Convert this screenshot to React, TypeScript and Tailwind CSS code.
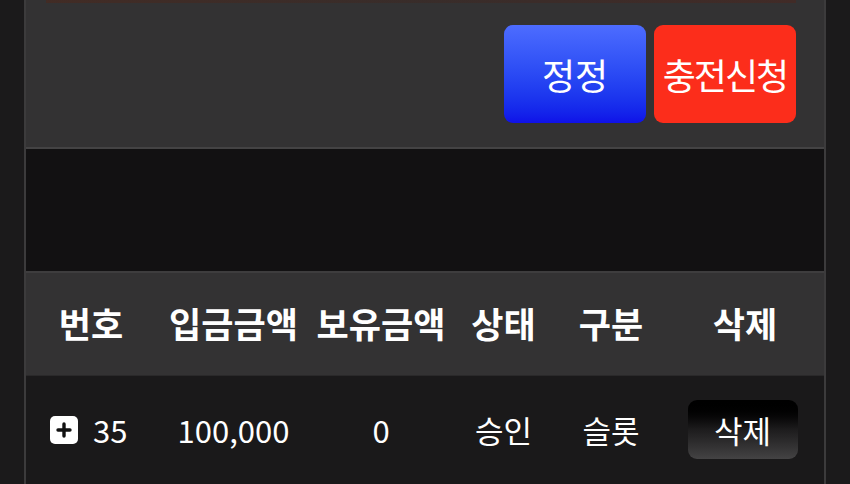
const font = { fontFamily: '"Noto Sans CJK KR", "Noto Sans", sans-serif' };

const cols = ["w-[130px]", "w-[155px]", "w-[140px]", "w-[105px]", "w-[110px]", "flex-1"];
const heads = ["번호", "입금금액", "보유금액", "상태", "구분", "삭제"];

function PlusBox() {
  return (
    <span className="w-[28px] h-[28px] rounded-[5px] bg-white flex items-center justify-center">
      <svg width="16" height="16" viewBox="0 0 16 16">
        <path d="M8 2v12M2 8h12" stroke="#111" strokeWidth="3.4" strokeLinecap="round" />
      </svg>
    </span>
  );
}

export default function App() {
  return (
    <div className="w-[850px] h-[484px] bg-[#1b1a1b] overflow-hidden" style={font}>
      <div className="mx-[24px] w-[802px] h-full flex flex-col border-x-2 border-[#3c3b3c]">
        {/* top panel with actions */}
        <section className="relative h-[150px] bg-[#333233] border-b-2 border-[#444344] flex justify-end items-start pt-[25px] pr-[28px] gap-[8px]">
          <div className="absolute left-[20px] right-[28px] top-0 h-[3px] bg-gradient-to-r from-[#48291f] via-[#3b2a26] to-[#472822] opacity-70" />
          <button className="w-[142px] h-[98px] rounded-[9px] bg-gradient-to-b from-[#4d6cff] to-[#1010e8] text-white text-[36px] leading-none">
            정정
          </button>
          <button className="w-[142px] h-[98px] rounded-[9px] bg-[#fc2d1b] text-white text-[36px] leading-none tracking-[-2px]">
            충전신청
          </button>
        </section>

        <div className="h-[123px] bg-[#121112]" />

        {/* table */}
        <div className="flex h-[106px] bg-[#333233] border-t-2 border-[#3e3d3e] border-b border-b-[#2a292a]">
          {heads.map((h, i) => (
            <div key={h} className={`${cols[i]} flex items-center justify-center text-white font-bold text-[35px] leading-none pb-[2px]`}>
              {h}
            </div>
          ))}
        </div>
        <div className="flex flex-1 bg-[#1a191a] text-white text-[31px] leading-none">
          <div className={`${cols[0]} h-[108px] flex items-center gap-[15px] pl-[24px]`}>
            <PlusBox />
            <span>35</span>
          </div>
          <div className={`${cols[1]} h-[108px] flex items-center justify-center`}>100,000</div>
          <div className={`${cols[2]} h-[108px] flex items-center justify-center`}>0</div>
          <div className={`${cols[3]} h-[108px] flex items-center justify-center`}>승인</div>
          <div className={`${cols[4]} h-[108px] flex items-center justify-center`}>슬롯</div>
          <div className={`${cols[5]} h-[108px] flex items-center justify-center pr-[5px]`}>
            <button className="w-[110px] h-[59px] rounded-[9px] bg-gradient-to-b from-[#000000] via-[#1d1c1d] to-[#444344] text-white text-[31px] leading-none">
              삭제
            </button>
          </div>
        </div>
      </div>
    </div>
  );
}
